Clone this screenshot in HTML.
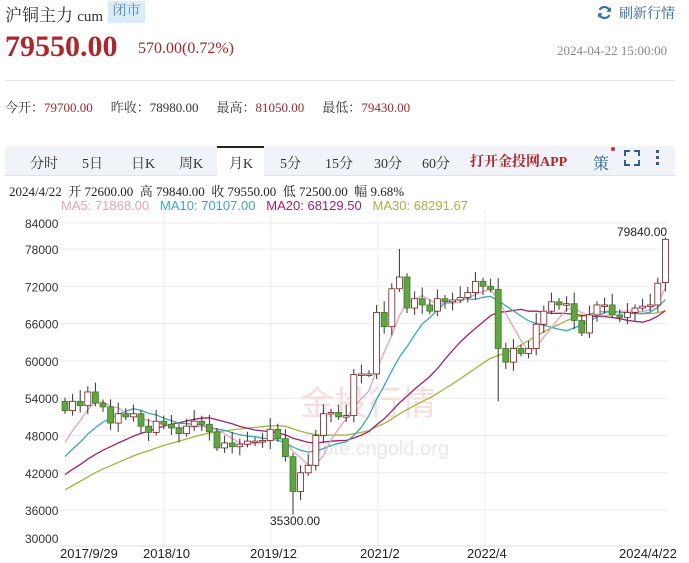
<!DOCTYPE html>
<html><head><meta charset="utf-8">
<style>
body{margin:0;width:689px;height:563px;overflow:hidden;background:#fff;font-family:"Liberation Serif","Noto Serif CJK SC",serif;color:#333;position:relative}
.a{position:absolute;white-space:nowrap}
.red{color:#a3262c}
</style></head><body>
<div class="a" style="left:5px;top:1px;font-size:17px;color:#333">沪铜主力 <span style="font-size:15px">cum</span></div>
<div class="a" style="left:108px;top:1px;width:37px;height:22px;background:#dcecf7;color:#3d8bc4;font-size:14px;line-height:22px;text-align:center">闭市</div>
<svg class="a" style="left:597px;top:5px" width="15" height="15" viewBox="0 0 16 16"><path d="M13.5 6A6 6 0 0 0 2.7 5.2M2.5 10a6 6 0 0 0 10.8.8" fill="none" stroke="#2d6ea8" stroke-width="2.2"/><path d="M14.8 2.2v5h-5z M1.2 13.8v-5h5z" fill="#2d6ea8"/></svg>
<div class="a" style="left:619px;top:3px;font-size:14px;color:#2d5f8e">刷新行情</div>
<div class="a red" style="left:5px;top:30px;font-size:30px;font-weight:bold;color:#b0252b">79550.00</div>
<div class="a red" style="left:138px;top:40px;font-size:16px">570.00(0.72%)</div>
<div class="a" style="left:557px;top:43px;font-size:13px;color:#888">2024-04-22 15:00:00</div>
<div class="a" style="left:5px;top:80px;width:670px;height:1px;background:#e4e4e4"></div>
<div class="a" style="left:5px;top:97px;font-size:13px">今开：<span class="red">79700.00</span><span style="margin-left:18px">昨收：78980.00</span><span style="margin-left:18px">最高：<span class="red">81050.00</span></span><span style="margin-left:18px">最低：<span class="red">79430.00</span></span></div>
<div class="a" style="left:5px;top:146px;width:670px;height:29px;background:#f0f3f7;border-bottom:1px solid #dde3ea"></div>
<div class="a" style="left:217px;top:146px;width:47px;height:30px;background:#fff;border-top:2px solid #222;box-sizing:border-box"></div>
<div class="a" style="left:0;top:153px;font-size:14px;color:#333">
<span class="a" style="left:30px">分时</span><span class="a" style="left:82px">5日</span><span class="a" style="left:131px">日K</span><span class="a" style="left:179px">周K</span><span class="a" style="left:229px">月K</span><span class="a" style="left:280px">5分</span><span class="a" style="left:325px">15分</span><span class="a" style="left:374px">30分</span><span class="a" style="left:422px">60分</span>
<span class="a" style="left:470px;top:-2px;color:#b0252b;font-weight:bold;font-size:14px">打开金投网APP</span>
<span class="a" style="left:593px;color:#2d5f8e;font-size:16px;top:-2px">策</span>
</div>
<div class="a" style="left:611px;top:147px;width:4px;height:4px;border-radius:50%;background:#c0303a"></div>
<svg class="a" style="left:624px;top:150px" width="16" height="16"><path d="M1 6V1h5M10 1h5v5M15 10v5h-5M6 15H1v-5" fill="none" stroke="#2d5f8e" stroke-width="2"/></svg>
<svg class="a" style="left:655px;top:150px" width="6" height="16"><rect x="1" y="0" width="3" height="3" fill="#2d5f8e"/><rect x="1" y="6" width="3" height="3" fill="#2d5f8e"/><rect x="1" y="12" width="3" height="3" fill="#2d5f8e"/></svg>
<div class="a" style="left:9px;top:181px;font-size:13px;color:#222">2024/4/22&nbsp; 开 72600.00&nbsp; 高 79840.00&nbsp; 收 79550.00&nbsp; 低 72500.00&nbsp; 幅 9.68%</div>
<div class="a" style="left:61px;top:198px;font-size:13px;font-family:'Liberation Sans',sans-serif"><span style="color:#e3a4b8">MA5: 71868.00</span>&nbsp;&nbsp; <span style="color:#3aa8b8">MA10: 70107.00</span>&nbsp;&nbsp; <span style="color:#a3206c">MA20: 68129.50</span>&nbsp;&nbsp; <span style="color:#a8b040">MA30: 68291.67</span></div>
<svg id="c" class="a" style="left:0;top:210px" width="689" height="353" font-family="Liberation Sans, sans-serif" font-size="12"></svg>
<script>
var svg=document.getElementById('c');var ns='http://www.w3.org/2000/svg';
function el(t,a,txt){var e=document.createElementNS(ns,t);for(var k in a)e.setAttribute(k,a[k]);if(txt)e.textContent=txt;svg.appendChild(e);return e;}
function Y(v){return 249-210+(78000-v)/6000*37.3;}
var labs=[78000,72000,66000,60000,54000,48000,42000,36000];
labs.forEach(function(v){var y=Y(v);el('line',{x1:60,x2:668,y1:y,y2:y,stroke:'#ececec'});el('text',{x:25,y:y+5,fill:'#333'},v);});
el('line',{x1:60,x2:668,y1:13,y2:13,stroke:'#ececec'});
el('text',{x:25,y:18,fill:'#333'},'84000');
el('text',{x:25,y:333,fill:'#333'},'30000');
[164,271,378,485].forEach(function(x){el('line',{x1:x,x2:x,y1:0,y2:336,stroke:'#ececec'});});
el('line',{x1:60,x2:668,y1:336,y2:336,stroke:'#ddd'});
[['2017/9/29',60],['2018/10',143],['2019/12',250],['2021/2',360],['2022/4',467],['2024/4/22',619]].forEach(function(a){el('text',{x:a[1],y:348,fill:'#222','font-size':13},a[0]);});
el('text',{x:300,y:205,fill:'#f4dede','font-size':34,'font-family':'Noto Sans CJK SC'},'金投行情');
el('text',{x:300,y:245,fill:'#e8e8e8','font-size':20},'quote.cngold.org');
var pre=[];for(var i=0;i<29;i++)pre.push(32000+i*450+(i%3)*300);
pre[27]=46000;pre[28]=47500;pre[26]=45000;pre[25]=44000;pre[24]=43500;
var d=[52000,53500,52800,55000,53200,52600,50000,51500,51000,51500,49500,48500,50300,49800,49200,48300,49500,50300,49800,48600,46000,46800,46200,46600,47100,47100,47200,49000,47500,44600,39000,42000,43200,48000,51500,51700,51000,51200,57800,57900,57900,67800,65500,71600,73500,68500,70000,69000,68000,70000,69500,69800,70200,71000,72800,72000,71500,62000,59800,62000,61200,62000,65900,68000,69500,69000,69200,66500,64500,67400,69000,69000,67400,67000,67800,68500,68800,69000,72500,79550];
var all=pre.concat(d);
function ma(n){var pts=[];for(var i=0;i<d.length;i++){var s=0;for(var j=0;j<n;j++)s+=all[29+i-j];pts.push((65+i*7.6).toFixed(1)+','+Y(s/n).toFixed(1));}return pts.join(' ');}
[[30,'#a8b040'],[20,'#a3206c'],[10,'#3aa8b8'],[5,'#e3a4b8']].forEach(function(m){el('polyline',{points:ma(m[0]),fill:'none',stroke:m[1],'stroke-width':1.3});});
for(var i=0;i<d.length;i++){var o=i?d[i-1]:53500,c=d[i];if(i==79)o=72600;var x=65+i*7.6;var hi=Math.max(o,c)+600+((i*37)%5)*300,lo=Math.min(o,c)-500-((i*53)%4)*300;
if(i==79)hi=79840;if(i==30)lo=35300;if(i==44)hi=78000;if(i==57)lo=53500;
var up=c>=o;el('line',{x1:x,x2:x,y1:Y(hi),y2:Y(lo),stroke:'#333','stroke-width':1});
var y1=Y(Math.max(o,c)),h=Math.max(1.5,Y(Math.min(o,c))-y1);
el('rect',{x:x-3,y:y1,width:6,height:h,fill:up?'#fff':'#5fa640',stroke:up?'#7a1a20':'#3c7a28','stroke-width':0.8});}
el('text',{x:617,y:26,fill:'#222','font-size':12},'79840.00');
el('text',{x:270,y:315,fill:'#222','font-size':12},'35300.00');
</script>
</body></html>
